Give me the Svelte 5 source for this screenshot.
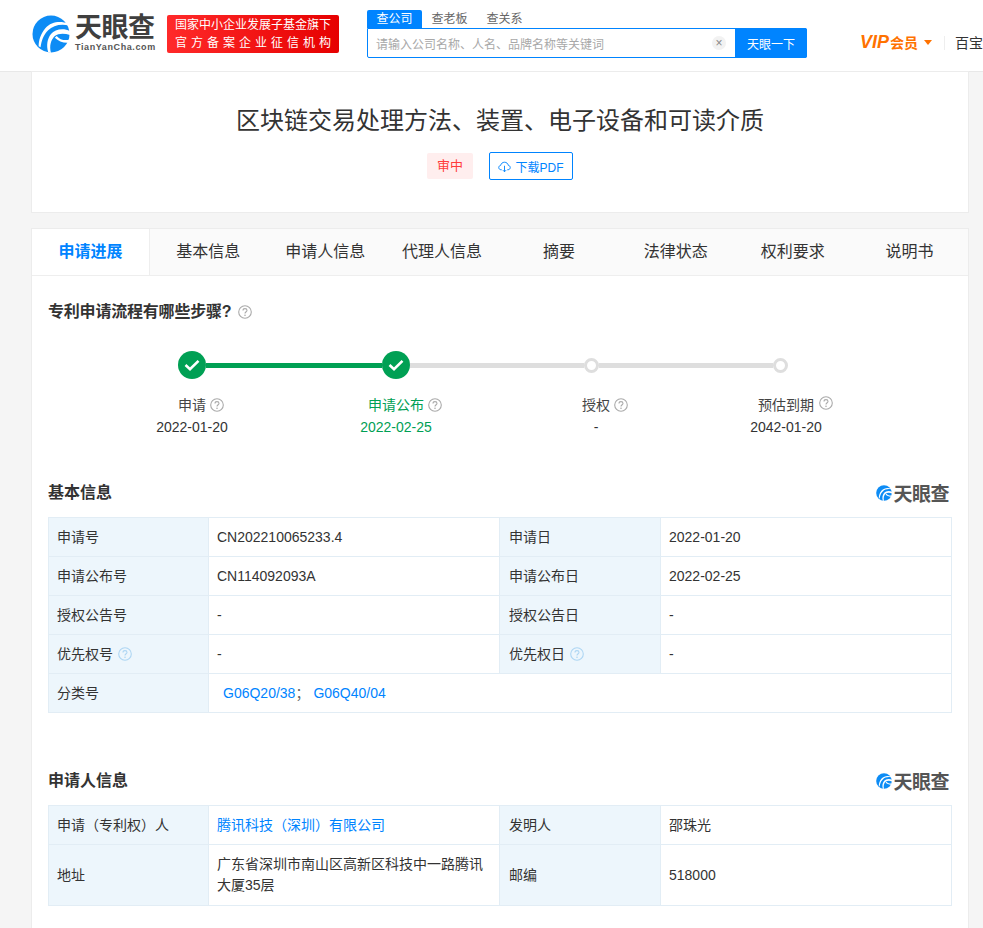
<script>
	const tabs = ['申请进展', '基本信息', '申请人信息', '代理人信息', '摘要', '法律状态', '权利要求', '说明书'];
	const steps = [
		{ name: '申请', date: '2022-01-20', done: true },
		{ name: '申请公布', date: '2022-02-25', current: true, done: true },
		{ name: '授权', date: '-' },
		{ name: '预估到期', date: '2042-01-20', raised: true }
	];
	const basic = [
		['申请号', 'CN202210065233.4', '申请日', '2022-01-20'],
		['申请公布号', 'CN114092093A', '申请公布日', '2022-02-25'],
		['授权公告号', '-', '授权公告日', '-'],
		['优先权号', '-', '优先权日', '-']
	];
</script>

{#snippet logoMark(size)}
	<svg class="mark" width={size} height={size} viewBox="0 0 40 40">
		<circle cx="20" cy="20" r="19.5" fill="#0d8cf5" />
		<path d="M38 9C30 6 20 7 14 14C9 20 7 27 7 33L9 34C10 27 12 21 17 16C22 11 30 9 39 11Z" fill="#fff" />
		<path d="M40 17C33 13 24 15 20 20C16 25 15 32 17 39L20 40C18 32 20 26 24 22C28 19 34 19 40 21Z" fill="#fff" />
		<path d="M24 24C28 28 34 30 40 29L39.5 26C34 27 29 26 26 22Z" fill="#fff" />
	</svg>
{/snippet}

{#snippet qmark(kind)}
	<svg class="q {kind}" width="14" height="14" viewBox="0 0 14 14">
		<circle cx="7" cy="7" r="6.3" fill="none" stroke="currentColor" stroke-width="1.1" />
		<path d="M5 5.5C5 4.3 6 3.6 7 3.6C8.1 3.6 9 4.3 9 5.4C9 6.7 7 6.8 7 8.6" fill="none" stroke="currentColor" stroke-width="1.1" />
		<circle cx="7" cy="10.3" r=".8" fill="currentColor" />
	</svg>
{/snippet}

{#snippet sectionHead(title)}
	<div class="sec-head">
		<h3>{title}</h3>
		<div class="wm">{@render logoMark(16)}<span>天眼查</span></div>
	</div>
{/snippet}

{#snippet check()}
	<svg width="16" height="12" viewBox="0 0 16 12"><path d="M1.5 6L6 10.2L14.5 1.8" fill="none" stroke="#fff" stroke-width="2.6" /></svg>
{/snippet}

<header class="top">
	<div class="logo">
		{@render logoMark(38)}
		<div class="logo-text">
			<b>天眼查</b>
			<small>TianYanCha.com</small>
		</div>
	</div>
	<div class="badge">
		<span>国家中小企业发展子基金旗下</span>
		<span class="wide">官方备案企业征信机构</span>
	</div>
	<div class="search">
		<div class="search-tabs">
			<span class="on">查公司</span>
			<span>查老板</span>
			<span>查关系</span>
		</div>
		<div class="search-box">
			<div class="input">
				<span>请输入公司名称、人名、品牌名称等关键词</span>
				<i class="clear">×</i>
			</div>
			<button>天眼一下</button>
		</div>
	</div>
	<div class="vip"><em>VIP</em><b>会员</b><i class="caret"></i></div>
	<div class="sep"></div>
	<div class="more">百宝</div>
</header>

<main class="page">
	<section class="title-card">
		<h1>区块链交易处理方法、装置、电子设备和可读介质</h1>
		<div class="title-actions">
			<span class="status">审中</span>
			<a class="pdf">
				<svg width="13" height="13" viewBox="0 0 14 14" fill="none" stroke="currentColor">
					<path d="M4 10.5H3.2C1.8 10.5 .8 9.4 .8 8.1C.8 6.9 1.7 5.9 2.9 5.8C3.2 3.8 4.9 2.4 7 2.4C9.1 2.4 10.8 3.8 11.1 5.8C12.3 5.9 13.2 6.9 13.2 8.1C13.2 9.4 12.2 10.5 10.8 10.5H10" />
					<path d="M7 6.2V12.6M5.2 10.9L7 12.7L8.8 10.9" />
				</svg>
				下载PDF
			</a>
		</div>
	</section>

	<section class="detail">
		<nav class="tabs">
			{#each tabs as tab, i}
				<div class="tab" class:active={i === 0}>{tab}</div>
			{/each}
		</nav>

		<div class="body">
			<div class="flow-title">
				<h3>专利申请流程有哪些步骤?</h3>
				{@render qmark('gray')}
			</div>

			<div class="track">
				<i class="node done">{@render check()}</i>
				<i class="seg s1 green"></i>
				<i class="node done">{@render check()}</i>
				<i class="seg s2"></i>
				<i class="node ring"></i>
				<i class="seg s3"></i>
				<i class="node ring"></i>
			</div>

			<div class="steps">
				{#each steps as step}
					<div class="step" class:current={step.current}>
						<div class="step-name">
							<span>{step.name}{@render qmark(step.raised ? 'gray raised' : 'gray')}</span>
						</div>
						<div class="step-date">{step.date}</div>
					</div>
				{/each}
			</div>

			{@render sectionHead('基本信息')}
			<table>
				<tbody>
					{#each basic as row, i}
						<tr>
							<th>{row[0]}{#if i === 3}{@render qmark('blue')}{/if}</th>
							<td>{row[1]}</td>
							<th>{row[2]}{#if i === 3}{@render qmark('blue')}{/if}</th>
							<td>{row[3]}</td>
						</tr>
					{/each}
					<tr>
						<th>分类号</th>
						<td colspan="3" class="codes"><a>G06Q20/38</a><span>；</span><a>G06Q40/04</a></td>
					</tr>
				</tbody>
			</table>

			<div class="gap"></div>
			{@render sectionHead('申请人信息')}
			<table>
				<tbody>
					<tr>
						<th>申请（专利权）人</th>
						<td><a>腾讯科技（深圳）有限公司</a></td>
						<th>发明人</th>
						<td>邵珠光</td>
					</tr>
					<tr class="tall">
						<th>地址</th>
						<td>广东省深圳市南山区高新区科技中一路腾讯大厦35层</td>
						<th>邮编</th>
						<td>518000</td>
					</tr>
				</tbody>
			</table>
		</div>
	</section>
</main>

<style>
	:global(body) {
		margin: 0;
		background: #f5f5f5;
		font-family: "Liberation Sans", "Noto Sans CJK SC", sans-serif;
		color: #333;
		overflow: hidden;
	}

	* {
		box-sizing: border-box;
	}

	.top {
		height: 72px;
		background: #fff;
		border-bottom: 1px solid #e8e8e8;
		display: flex;
		align-items: flex-start;
		padding-left: 32px;
		overflow: hidden;
		white-space: nowrap;
	}

	.top > * {
		flex: none;
	}

	.logo {
		display: flex;
		align-items: center;
		margin-top: 15px;
		width: 135px;
	}

	.mark {
		display: block;
		flex: none;
	}

	.logo-text {
		margin-left: 5px;
		display: flex;
		flex-direction: column;
	}

	.logo-text b {
		font-size: 27px;
		line-height: 27px;
		letter-spacing: -.5px;
		color: #3f3f3f;
	}

	.logo-text small {
		font-size: 9px;
		line-height: 11px;
		font-weight: bold;
		letter-spacing: .6px;
		color: #555;
	}

	.badge {
		margin-top: 15px;
		width: 172px;
		height: 38px;
		background: linear-gradient(90deg, #ff2a2a, #e60000);
		border-radius: 2px;
		color: #fff;
		font-size: 12px;
		line-height: 18px;
		padding: 1px 0 0 8px;
		display: flex;
		flex-direction: column;
	}

	.badge .wide {
		letter-spacing: 4px;
	}

	.search {
		margin-left: 28px;
		margin-top: 10px;
		width: 440px;
	}

	.search-tabs {
		display: flex;
		height: 18px;
		font-size: 12px;
		line-height: 18px;
		color: #666;
	}

	.search-tabs span {
		width: 55px;
		text-align: center;
	}

	.search-tabs .on {
		background: #0084ff;
		color: #fff;
		border-radius: 2px 2px 0 0;
	}

	.search-box {
		display: flex;
		height: 30px;
		border: 1px solid #0084ff;
		border-radius: 0 2px 2px 2px;
	}

	.input {
		flex: 1;
		display: flex;
		align-items: center;
		justify-content: space-between;
		padding: 0 9px 0 8px;
		font-size: 12px;
		color: #a8a8a8;
	}

	.clear {
		width: 14px;
		height: 14px;
		border-radius: 50%;
		background: #f2f2f2;
		color: #888;
		font-style: normal;
		font-size: 12px;
		line-height: 14px;
		text-align: center;
	}

	button {
		width: 72px;
		margin: -1px -1px -1px 0;
		border: 0;
		border-radius: 0 2px 2px 0;
		background: #0084ff;
		color: #fff;
		font: inherit;
		font-size: 12px;
		padding: 0;
	}

	.vip {
		margin-left: 53px;
		margin-top: 33px;
		display: flex;
		align-items: center;
		color: #ff7200;
		height: 18px;
	}

	.vip em {
		font-size: 18px;
		font-weight: bold;
		font-style: italic;
	}

	.vip b {
		font-size: 14px;
		margin-left: 1px;
	}

	.caret {
		margin-left: 6px;
		margin-top: 1px;
		border: 4.5px solid transparent;
		border-top: 5px solid #ff7200;
		border-bottom: 0;
	}

	.sep {
		width: 1px;
		height: 14px;
		margin: 36px 0 0 12px;
		background: #eee;
	}

	.more {
		margin: 34px 0 0 10px;
		font-size: 14px;
		line-height: 18px;
		color: #333;
	}

	.page {
		margin: 0 14px 0 31px;
		margin-top: -1px;
	}

	.title-card,
	.detail {
		background: #fff;
		border: 1px solid #ececec;
	}

	.title-card {
		height: 142px;
		padding-top: 31px;
		text-align: center;
	}

	h1 {
		margin: 0;
		font-size: 24px;
		line-height: 36px;
		font-weight: 400;
		color: #333;
	}

	.title-actions {
		display: flex;
		justify-content: center;
		align-items: center;
		gap: 16px;
		margin-top: 13px;
	}

	.status {
		width: 46px;
		height: 26px;
		line-height: 26px;
		font-size: 13px;
		color: #ff3b3b;
		background: #ffeeee;
		border-radius: 2px;
	}

	.pdf {
		width: 84px;
		height: 28px;
		border: 1px solid #0084ff;
		border-radius: 2px;
		color: #0084ff;
		font-size: 12px;
		display: flex;
		align-items: center;
		justify-content: center;
		gap: 4px;
	}

	.detail {
		margin-top: 15px;
		height: 740px;
	}

	.tabs {
		display: flex;
		height: 47px;
		background: #fafafa;
		border-bottom: 1px solid #eee;
	}

	.tab {
		flex: 1;
		text-align: center;
		font-size: 16px;
		line-height: 45px;
		color: #333;
	}

	.tab.active {
		background: #fff;
		color: #0084ff;
		font-weight: bold;
		border-right: 1px solid #eee;
		height: 46px;
	}

	.body {
		padding: 0 16px;
	}

	h3 {
		margin: 0;
		font-size: 16px;
		line-height: 24px;
		font-weight: bold;
		color: #333;
	}

	.flow-title {
		display: flex;
		align-items: center;
		gap: 7px;
		padding-top: 24px;
	}

	.flow-title h3 {
		letter-spacing: -.2px;
	}

	.q {
		display: inline-block;
		flex: none;
	}

	.q.gray {
		color: #aaa;
	}

	.q.blue {
		color: #aed6f3;
		margin-left: 5px;
		vertical-align: -2px;
	}

	.track {
		display: flex;
		align-items: center;
		margin: 27px 0 0 130px;
		height: 28px;
	}

	.node {
		flex: none;
		display: flex;
		align-items: center;
		justify-content: center;
		border-radius: 50%;
	}

	.node.done {
		width: 28px;
		height: 28px;
		background: #00a054;
	}

	.node.ring {
		width: 15px;
		height: 15px;
		background: #fff;
		border: 3px solid #dedede;
	}

	.seg {
		height: 5px;
		background: #dedede;
	}

	.s1 {
		width: 176px;
	}

	.s2 {
		width: 174px;
	}

	.s3 {
		width: 174px;
	}

	.seg.green {
		background: #00a054;
	}

	.steps {
		display: grid;
		grid-template-columns: 204px 204px 196px 184px;
		margin: 16px 0 0 42px;
		text-align: center;
		font-size: 14px;
		line-height: 21px;
	}

	.step-name span {
		position: relative;
		color: #444;
	}

	.step-name span :global(.q) {
		position: absolute;
		left: 100%;
		top: 1px;
		margin-left: 4px;
	}

	.step-name span :global(.q.raised) {
		top: -1px;
		margin-left: 5px;
	}

	.step-date {
		margin-top: 1px;
		color: #333;
	}

	.step.current .step-name span,
	.step.current .step-date {
		color: #00a054;
	}

	.sec-head {
		display: flex;
		align-items: center;
		justify-content: space-between;
		height: 24px;
	}

	.steps + .sec-head {
		margin-top: 43px;
	}

	.sec-head + table {
		margin-top: 12px;
	}

	.wm {
		display: flex;
		align-items: center;
		color: #555;
		font-size: 19px;
		font-weight: bold;
		padding-right: 3px;
		letter-spacing: -.5px;
	}

	.wm span {
		margin: -2px 0 0 1px;
	}

	table {
		width: 904px;
		border-collapse: collapse;
		table-layout: fixed;
		font-size: 14px;
	}

	tr {
		height: 39px;
	}

	tr.tall {
		height: 61px;
	}

	th,
	td {
		border: 1px solid #e2edf5;
		padding: 0 8px;
		text-align: left;
		font-weight: 400;
		color: #333;
		line-height: 21px;
	}

	th {
		background: #edf6fc;
	}

	th:nth-child(1) {
		width: 160px;
	}

	td:nth-child(2) {
		width: 291px;
	}

	th:nth-child(3) {
		width: 161px;
		padding-left: 9px;
	}

	a {
		color: #0084ff;
	}

	.codes {
		padding-left: 14px;
	}

	.codes span {
		color: #666;
		margin-right: 4px;
	}

	.gap {
		height: 56px;
	}
</style>
